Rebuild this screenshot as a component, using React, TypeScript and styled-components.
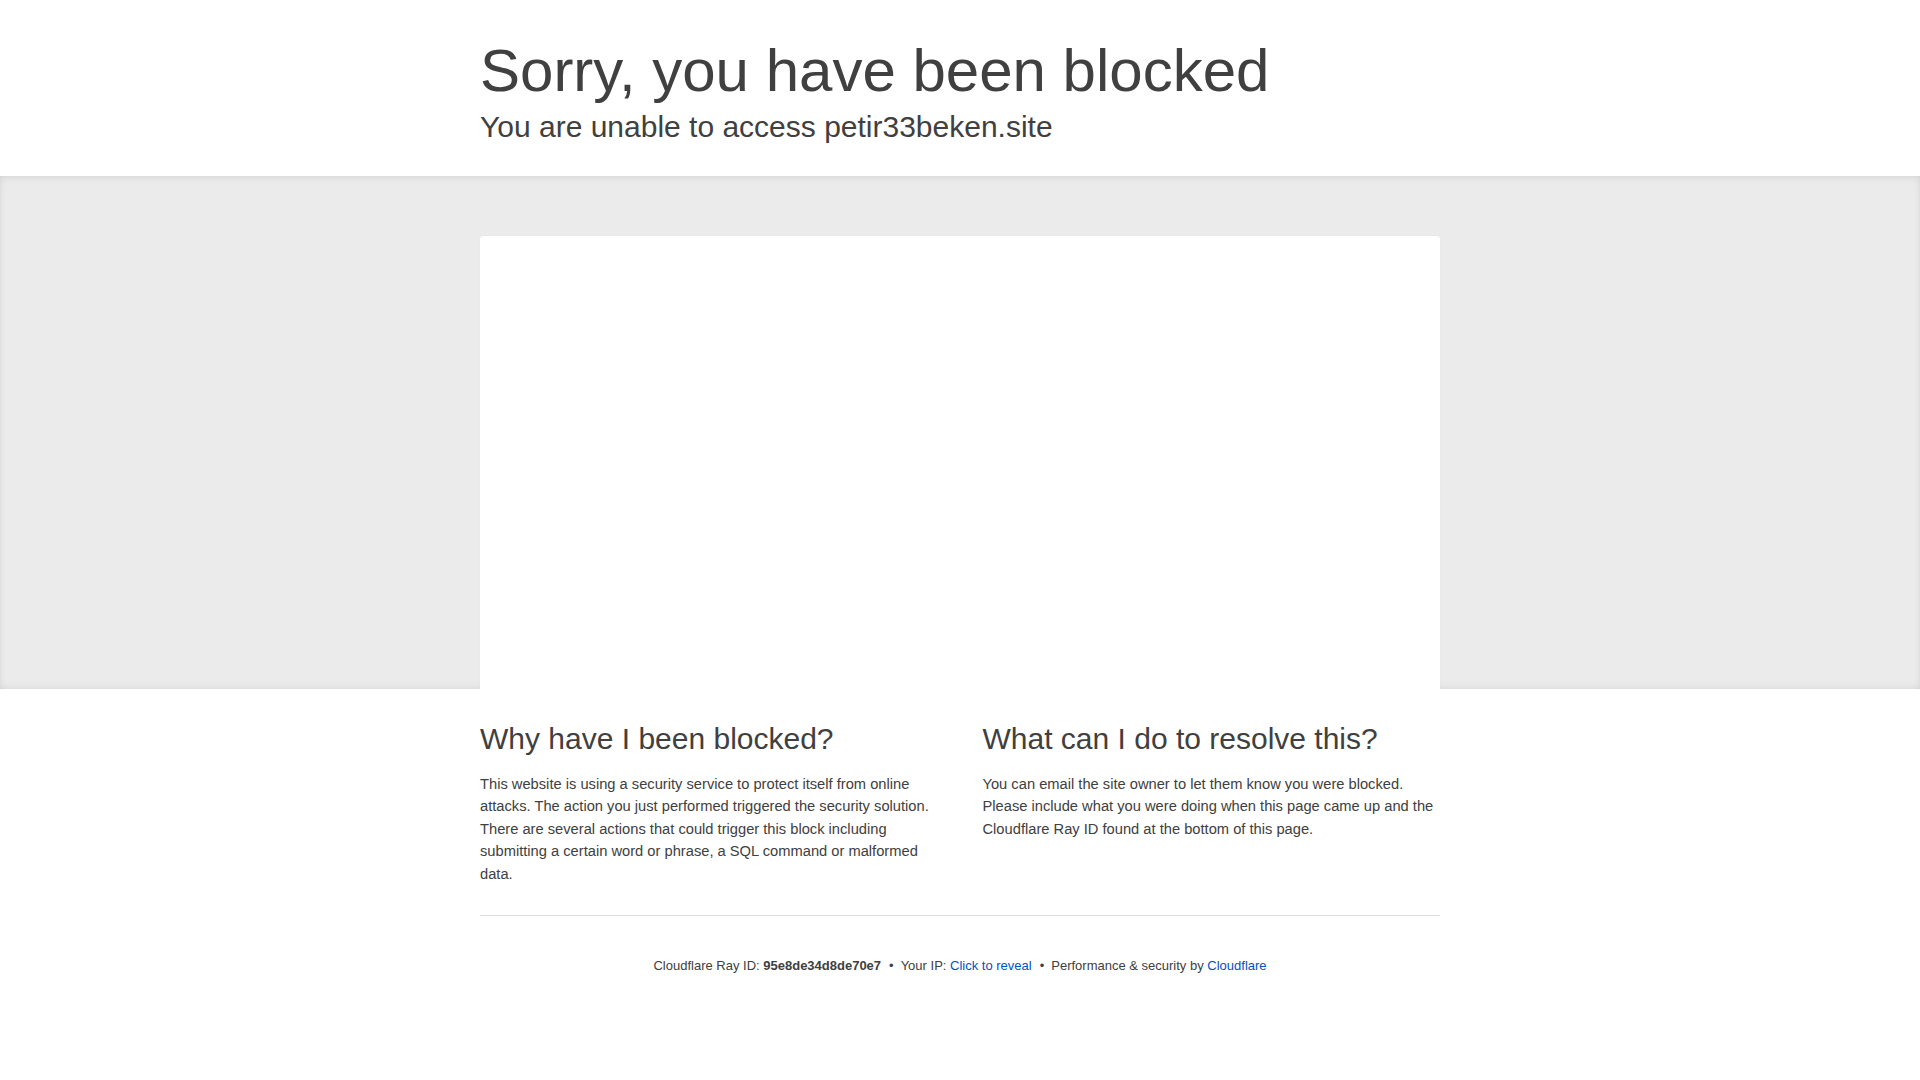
import React from 'react';
import styled, { createGlobalStyle } from 'styled-components';

const GlobalStyle = createGlobalStyle`
  html, body {
    margin: 0;
    padding: 0;
    background: #fff;
  }
  body {
    font-family: 'Liberation Sans', Arial, sans-serif;
    color: #404040;
    -webkit-font-smoothing: antialiased;
  }
  * {
    box-sizing: border-box;
  }
`;

const Wrapper = styled.div`
  width: 960px;
  margin: 0 auto;
`;

const Header = styled.header`
  padding: 38px 0 30px;
`;

const Title = styled.h1`
  margin: 0;
  font-size: 60px;
  line-height: 66px;
  font-weight: 300;
  color: #404040;
`;

const Subtitle = styled.h2`
  margin: 3px 0 0;
  font-size: 30px;
  line-height: 39px;
  font-weight: 300;
  color: #404040;
`;

const Highlight = styled.section`
  height: 513px;
  background: #ebebeb;
  overflow: hidden;
  box-shadow: inset 0 3px 8px -2px rgba(0, 0, 0, 0.09), inset 0 -3px 8px -2px rgba(0, 0, 0, 0.07);
`;

const ScreenshotArea = styled(Wrapper)`
  height: 100%;
  padding-top: 60px;
  display: flex;
`;

const NoScreenshot = styled.div`
  flex: 1;
  background: #fff;
  border-radius: 3px 3px 0 0;
  box-shadow: 0 0 2px rgba(0, 0, 0, 0.04);
`;

const Columns = styled.div`
  display: grid;
  grid-template-columns: 1fr 1fr;
  column-gap: 45px;
  padding-top: 32px;
`;

const Column = styled.div``;

const ColumnTitle = styled.h2`
  margin: 0 0 15.5px;
  font-size: 30px;
  line-height: 36px;
  font-weight: 300;
  color: #404040;
`;

const Paragraph = styled.p`
  margin: 0;
  font-size: 14.7px;
  line-height: 22.5px;
  color: #404040;
`;

const Footer = styled.footer`
  margin-top: 30px;
  border-top: 1px solid #dedede;
  padding-top: 40px;
  text-align: center;
  font-size: 13px;
  line-height: 19.5px;
  color: #404040;
`;

const FooterItem = styled.span``;

const Strong = styled.span`
  font-weight: 700;
`;

const Separator = styled.span`
  margin: 0 7px 0 8px;
`;

const Link = styled.a`
  color: #0051c3;
  text-decoration: none;
  cursor: pointer;
`;

export default function App() {
  return (
    <>
      <GlobalStyle />
      <Wrapper>
        <Header>
          <Title>Sorry, you have been blocked</Title>
          <Subtitle>You are unable to access petir33beken.site</Subtitle>
        </Header>
      </Wrapper>

      <Highlight>
        <ScreenshotArea>
          <NoScreenshot />
        </ScreenshotArea>
      </Highlight>

      <Wrapper>
        <Columns>
          <Column>
            <ColumnTitle>Why have I been blocked?</ColumnTitle>
            <Paragraph>
              This website is using a security service to protect itself from online attacks. The action you
              just performed triggered the security solution. There are several actions that could trigger this
              block including submitting a certain word or phrase, a SQL command or malformed data.
            </Paragraph>
          </Column>
          <Column>
            <ColumnTitle>What can I do to resolve this?</ColumnTitle>
            <Paragraph>
              You can email the site owner to let them know you were blocked. Please include what you were doing
              when this page came up and the Cloudflare Ray ID found at the bottom of this page.
            </Paragraph>
          </Column>
        </Columns>

        <Footer>
          <FooterItem>
            Cloudflare Ray ID: <Strong>95e8de34d8de70e7</Strong>
          </FooterItem>
          <Separator>•</Separator>
          <FooterItem>
            Your IP: <Link>Click to reveal</Link>
          </FooterItem>
          <Separator>•</Separator>
          <FooterItem>
            Performance &amp; security by <Link>Cloudflare</Link>
          </FooterItem>
        </Footer>
      </Wrapper>
    </>
  );
}
